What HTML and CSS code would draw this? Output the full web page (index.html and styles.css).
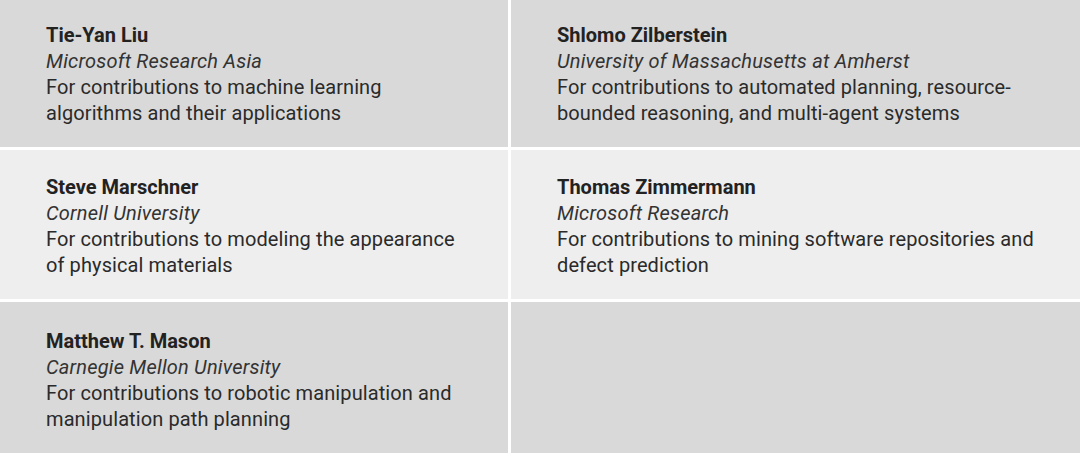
FILE: index.html
```html
<!DOCTYPE html>
<html lang="en">
<head>
<meta charset="utf-8">
<title>Fellows</title>
<link rel="stylesheet" href="styles.css">
</head>
<body>
<div class="grid">
  <div class="cell dark">
    <div class="name">Tie-Yan Liu</div>
    <div class="org">Microsoft Research Asia</div>
    <div class="cite">For contributions to machine learning<br>algorithms and their applications</div>
  </div>
  <div class="cell dark">
    <div class="name">Shlomo Zilberstein</div>
    <div class="org">University of Massachusetts at Amherst</div>
    <div class="cite">For contributions to automated planning, resource-<br>bounded reasoning, and multi-agent systems</div>
  </div>
  <div class="cell light">
    <div class="name">Steve Marschner</div>
    <div class="org">Cornell University</div>
    <div class="cite">For contributions to modeling the appearance<br>of physical materials</div>
  </div>
  <div class="cell light">
    <div class="name">Thomas Zimmermann</div>
    <div class="org">Microsoft Research</div>
    <div class="cite">For contributions to mining software repositories and<br>defect prediction</div>
  </div>
  <div class="cell dark">
    <div class="name">Matthew T. Mason</div>
    <div class="org">Carnegie Mellon University</div>
    <div class="cite">For contributions to robotic manipulation and<br>manipulation path planning</div>
  </div>
  <div class="cell dark"></div>
</div>
</body>
</html>
```
FILE: styles.css
```css
html, body {
  margin: 0;
  padding: 0;
  background: #ffffff;
}
body {
  width: 1080px;
  height: 457px;
  overflow: hidden;
  font-family: Roboto, "Liberation Sans", sans-serif;
  font-size: 20px;
  line-height: 26px;
  color: #2a2a2a;
}
.grid {
  display: grid;
  grid-template-columns: 508px 1fr;
  grid-template-rows: 147px 149px 151px;
  gap: 3px;
}
.cell {
  display: flex;
  flex-direction: column;
  justify-content: flex-end;
  padding: 0 20px 21px 46px;
}
.dark {
  background: #d9d9d9;
}
.light {
  background: #eeeeee;
}
.name {
  font-weight: 700;
  color: #222222;
}
.org {
  font-style: italic;
  letter-spacing: 0.2px;
  color: #333333;
}
.cite {
  letter-spacing: 0.1px;
  color: #2a2a2a;
}
```
